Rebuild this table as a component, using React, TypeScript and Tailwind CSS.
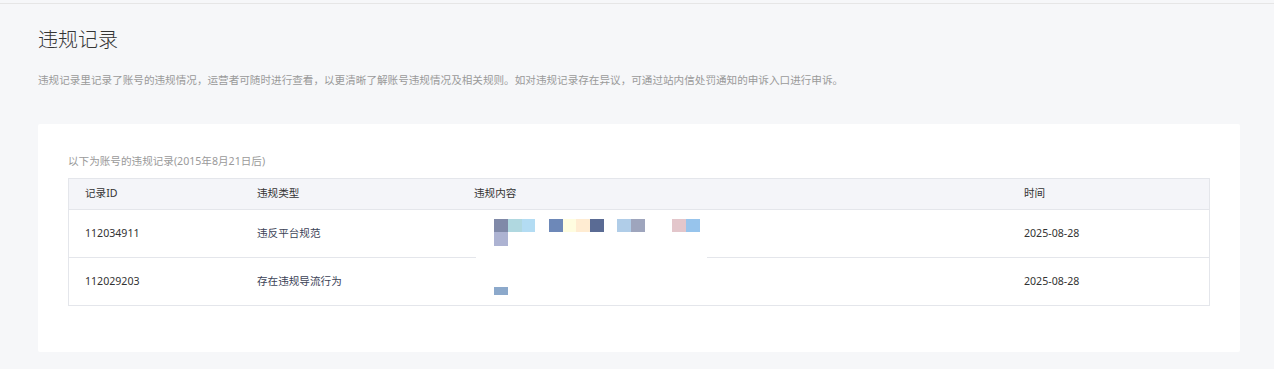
import React from 'react';

interface Row {
  id: string;
  kind: string;
  date: string;
  mosaic: 'a' | 'b';
}

const rows: Row[] = [
  { id: '112034911', kind: '违反平台规范', date: '2025-08-28', mosaic: 'a' },
  { id: '112029203', kind: '存在违规导流行为', date: '2025-08-28', mosaic: 'b' },
];

// pixelated thumbnail in the "content" column
function MosaicA() {
  return (
    <div className="flex flex-col">
      <div className="flex">
        <div className="w-[14px] h-[13px] bg-[#8089a8]" />
        <div className="w-[14px] h-[13px] bg-[#b0d8e0]" />
        <div className="w-[13px] h-[13px] bg-[#b3dcf3]" />
        <div className="w-[14px] h-[13px]" />
        <div className="w-[14px] h-[13px] bg-[#6d88b8]" />
        <div className="w-[13px] h-[13px] bg-[#fffde0]" />
        <div className="w-[14px] h-[13px] bg-[#ffecd2]" />
        <div className="w-[14px] h-[13px] bg-[#5a6b94]" />
        <div className="w-[13px] h-[13px]" />
        <div className="w-[14px] h-[13px] bg-[#b0cde8]" />
        <div className="w-[14px] h-[13px] bg-[#9ea5bd]" />
        <div className="w-[27px] h-[13px]" />
        <div className="w-[14px] h-[13px] bg-[#e3c6cb]" />
        <div className="w-[14px] h-[13px] bg-[#97c4ec]" />
      </div>
      <div className="w-[14px] h-[14px] bg-[#adb3d2]" />
    </div>
  );
}

export default function App() {
  return (
    <div className="min-h-[369px] bg-[#f6f7f9] text-[#333]" style={{ fontFamily: '"Noto Sans", "Noto Sans CJK SC", sans-serif' }}>
      <div className="h-[4px] border-b border-[#e6e6e6]" />
      <div className="px-[38px]">
        <h1 className="pt-[22px] text-[20px] leading-[28px] text-[#353535] font-light">违规记录</h1>
        <p className="mt-[17px] text-[10.6px] leading-[18px] text-[#9a9a9a]">
          违规记录里记录了账号的违规情况，运营者可随时进行查看，以更清晰了解账号违规情况及相关规则。如对违规记录存在异议，可通过站内信处罚通知的申诉入口进行申诉。
        </p>
        <div className="mt-[35px] w-[1202px] bg-white rounded-[2px] px-[30px] pt-[28px] pb-[46px]">
          <div className="text-[10.6px] leading-[18px] text-[#9a9a9a] mb-[8px]">以下为账号的违规记录(2015年8月21日后)</div>
          <div className="border border-[#e4e6eb] text-[10.6px] text-[#333]">
            <div className="flex h-[31px] items-center bg-[#f4f5f9] border-b border-[#e4e6eb]">
              <div className="w-[171px] pl-[16px]">记录ID</div>
              <div className="w-[217px] pl-[17px]">违规类型</div>
              <div className="w-[550px] pl-[17px]">违规内容</div>
              <div className="flex-1 pl-[17px]">时间</div>
            </div>
            {rows.map((r, i) => (
              <div key={r.id} className={'flex items-center relative ' + (i === 0 ? 'h-[48px] border-b border-[#e4e6eb]' : 'h-[47px]')}>
                <div className="w-[171px] pl-[16px]">{r.id}</div>
                <div className="w-[217px] pl-[17px] text-[#3b4256]">{r.kind}</div>
                <div className="w-[550px] pl-[37px] self-stretch">
                  {r.mosaic === 'a' ? (
                    <div className="pt-[9px]"><MosaicA /></div>
                  ) : (
                    <div className="pt-[29px]"><div className="w-[14px] h-[8px] bg-[#8ca9cb]" /></div>
                  )}
                </div>
                <div className="flex-1 pl-[17px]">{r.date}</div>
                {i === 0 && <div className="absolute left-[407px] top-[40px] w-[231px] h-[16px] bg-white" />}
              </div>
            ))}
          </div>
        </div>
      </div>
    </div>
  );
}
